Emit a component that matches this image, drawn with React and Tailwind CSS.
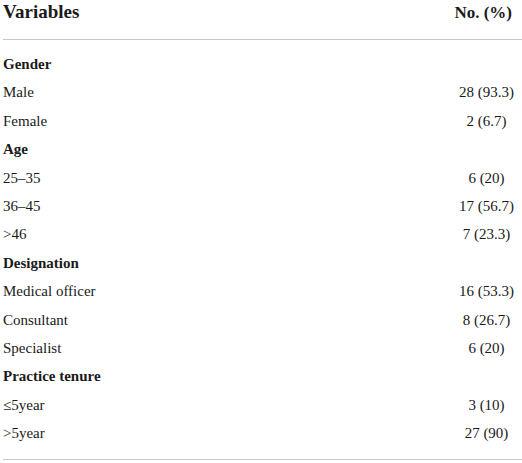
import React from "react";

const rows = [
  { label: "Gender", head: true },
  { label: "Male", value: "28 (93.3)" },
  { label: "Female", value: "2 (6.7)" },
  { label: "Age", head: true },
  { label: "25–35", value: "6 (20)" },
  { label: "36–45", value: "17 (56.7)" },
  { label: ">46", value: "7 (23.3)" },
  { label: "Designation", head: true },
  { label: "Medical officer", value: "16 (53.3)" },
  { label: "Consultant", value: "8 (26.7)" },
  { label: "Specialist", value: "6 (20)" },
  { label: "Practice tenure", head: true },
  { label: "≤5year", value: "3 (10)" },
  { label: ">5year", value: "27 (90)" },
];

export default function App() {
  return (
    <div className="w-[522px] h-[463px] bg-white text-[#1a1a1a] pl-[3px]" style={{ fontFamily: '"Liberation Serif", "Times New Roman", serif' }}>
      <div className="flex items-start justify-between pb-[14px] border-b border-[#c8c8c8]">
        <div className="text-[19px] leading-[24px] font-bold">Variables</div>
        <div className="pr-[10px] text-[17px] leading-[24px] font-bold pt-[1px]">No. (%)</div>
      </div>
      <div className="pt-[10px] pb-[12px] border-b border-[#c8c8c8]">
        {rows.map((r, i) => (
          <div key={i} className="grid grid-cols-[1fr_71px] h-[28.4px] text-[15px] leading-[28.4px]">
            <div className={r.head ? "font-bold" : ""}>{r.label}</div>
            <div className="text-center">{r.value || ""}</div>
          </div>
        ))}
      </div>
    </div>
  );
}
